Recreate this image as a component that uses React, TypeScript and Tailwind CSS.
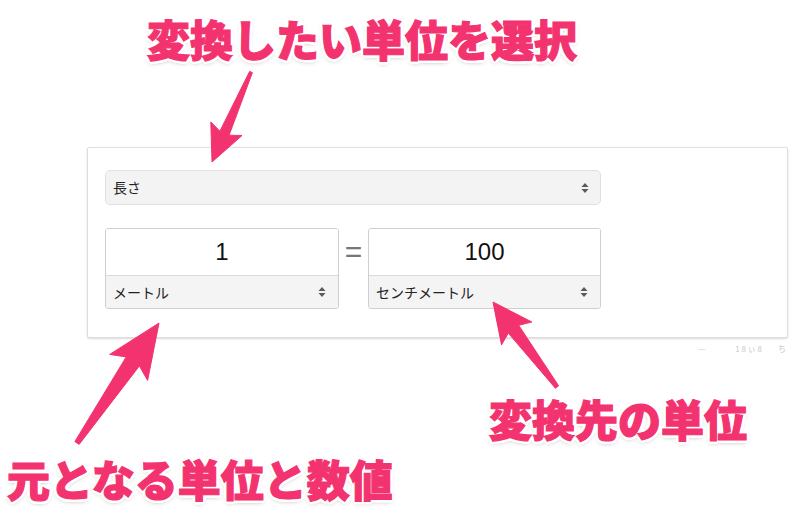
import React from "react";

const PINK = "#f3336f";

// Outline + soft drop shadow for the callout labels
const labelCls =
  "absolute whitespace-nowrap font-black text-[43px] leading-none text-[#f3336f] [-webkit-text-stroke:1.2px_#f3336f] [font-family:'Noto_Sans_CJK_JP','Noto_Sans',sans-serif] [text-shadow:3px_0_0_#fff,-3px_0_0_#fff,0_3px_0_#fff,0_-3px_0_#fff,2px_2px_0_#fff,-2px_2px_0_#fff,2px_-2px_0_#fff,-2px_-2px_0_#fff,3px_1px_0_#fff,-3px_1px_0_#fff,3px_-1px_0_#fff,-3px_-1px_0_#fff,1px_3px_0_#fff,-1px_3px_0_#fff,1px_-3px_0_#fff,-1px_-3px_0_#fff,0_2px_5px_rgba(0,0,0,0.35)]";

function Stepper() {
  return (
    <svg width="8" height="12" viewBox="0 0 8 12" className="shrink-0">
      <path d="M4 1 L7.5 5 L0.5 5 Z" fill="#5a5a5a" />
      <path d="M4 11 L7.5 7 L0.5 7 Z" fill="#5a5a5a" />
    </svg>
  );
}

function arrowPoints(
  tx: number,
  ty: number,
  px: number,
  py: number,
  w0: number,
  w1: number,
  w2: number,
  wf = 0.63,
  jf = 0.68
) {
  const dx = px - tx;
  const dy = py - ty;
  const L = Math.hypot(dx, dy);
  const nx = -dy / L;
  const ny = dx / L;
  const at = (f: number, s: number) =>
    `${(tx + dx * f + nx * s).toFixed(1)},${(ty + dy * f + ny * s).toFixed(1)}`;
  return [
    at(0, -w0),
    at(jf, -w1),
    at(wf, -w2),
    at(1, 0),
    at(wf, w2),
    at(jf, w1),
    at(0, w0),
  ].join(" ");
}

function Arrows() {
  return (
    <svg
      className="pointer-events-none absolute left-0 top-0"
      width="800"
      height="515"
      viewBox="0 0 800 515"
    >
      <g fill={PINK} stroke={PINK} strokeWidth="1" strokeLinejoin="round">
        <polygon points={arrowPoints(251, 72, 212, 162, 1.5, 5, 17)} />
        <polygon points={arrowPoints(77, 443, 159, 323, 2.5, 8, 23)} />
        <polygon points={arrowPoints(557, 387, 493, 302, 2, 6.5, 19)} />
      </g>
    </svg>
  );
}

function UnitBox({ value, unit }: { value: string; unit: string }) {
  return (
    <div className="flex h-[81px] flex-col overflow-hidden rounded-[3px] border border-[#cfcfcf]">
      <div className="flex h-[46px] items-center justify-center bg-white text-[24px] text-[#111] [font-family:'Liberation_Sans',Arial,sans-serif]">
        {value}
      </div>
      <div className="flex flex-1 items-center justify-between border-t border-[#dadada] bg-[#f4f4f4] pl-[7px] pr-[12px] text-[14px] text-[#222]">
        <span>{unit}</span>
        <Stepper />
      </div>
    </div>
  );
}

export default function App() {
  return (
    <div className="relative h-[515px] w-[800px] overflow-hidden bg-white [font-family:'Noto_Sans_CJK_JP','Noto_Sans',sans-serif]">
      <div className="ml-[87px] mt-[147px] h-[191px] w-[701px] rounded-[2px] border border-[#dedede] bg-white px-[17px] pt-[22px] shadow-[0_1px_2px_rgba(0,0,0,0.15)]">
        <div className="flex h-[35px] w-[496px] items-center justify-between rounded-[5px] border border-[#e0e0e0] bg-[#f3f3f3] pl-[7px] pr-[11px] text-[14px] text-[#222]">
          <span>長さ</span>
          <Stepper />
        </div>
        <div className="mt-[23px] flex items-start">
          <div className="w-[234px]">
            <UnitBox value="1" unit="メートル" />
          </div>
          <div className="flex h-[47px] w-[29px] items-center justify-center text-[30px] leading-none text-[#777] [font-family:'Liberation_Sans',Arial,sans-serif]">
            =
          </div>
          <div className="w-[233px]">
            <UnitBox value="100" unit="センチメートル" />
          </div>
        </div>
      </div>
      <div className="mt-[5px] flex w-[790px] items-center justify-end gap-[16px] pr-[4px] text-[8px] text-[#c8c8c8]">
        <span className="mr-[14px]">—</span>
        <span>1 8 ぃ 8</span>
        <span>ち</span>
      </div>

      <Arrows />

      <div className={labelCls + " left-[147px] top-[17px]"}>変換したい単位を選択</div>
      <div className={labelCls + " left-[7px] top-[457px]"}>元となる単位と数値</div>
      <div className={labelCls + " left-[489px] top-[397px]"}>変換先の単位</div>
    </div>
  );
}
